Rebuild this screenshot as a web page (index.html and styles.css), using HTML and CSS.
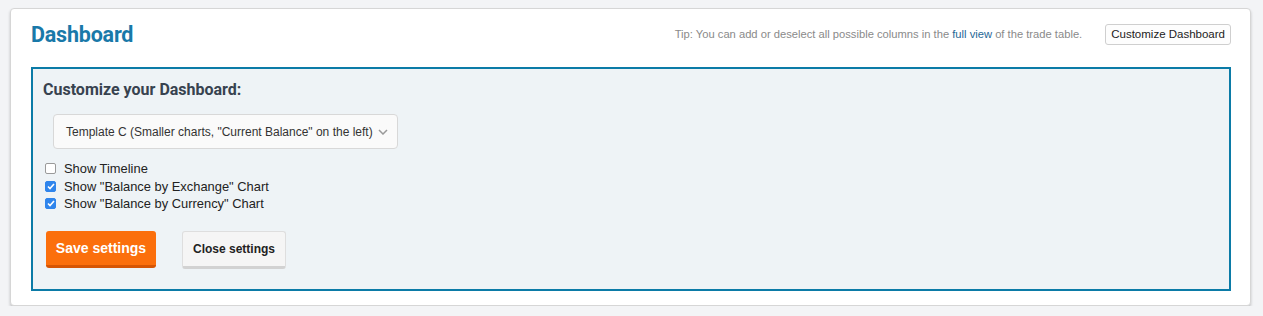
FILE: index.html
```html
<!DOCTYPE html>
<html>
<head>
<meta charset="utf-8">
<link rel="stylesheet" href="styles.css">
</head>
<body>
<div class="card">
  <div class="header">
    <h1 class="title">Dashboard</h1>
    <div class="header-right">
      <span class="tip">Tip: You can add or deselect all possible columns in the <a class="tip-link">full view</a> of the trade table.</span>
      <button class="btn-small">Customize Dashboard</button>
    </div>
  </div>
  <div class="settings">
    <h2 class="settings-title">Customize your Dashboard:</h2>
    <div class="select">
      <span>Template C (Smaller charts, "Current Balance" on the left)</span>
      <svg class="chev" width="10" height="6" viewBox="0 0 10 6"><path d="M1 1l4 4 4-4" fill="none" stroke="#999" stroke-width="1.5"/></svg>
    </div>
    <div class="checks">
      <label class="check"><span class="box"></span>Show Timeline</label>
      <label class="check"><span class="box on"><svg width="8" height="7" viewBox="0 0 8 7"><path d="M1 3.5l2 2L7 1" fill="none" stroke="#fff" stroke-width="1.6"/></svg></span>Show "Balance by Exchange" Chart</label>
      <label class="check"><span class="box on"><svg width="8" height="7" viewBox="0 0 8 7"><path d="M1 3.5l2 2L7 1" fill="none" stroke="#fff" stroke-width="1.6"/></svg></span>Show "Balance by Currency" Chart</label>
    </div>
    <div class="actions">
      <button class="btn-save">Save settings</button>
      <button class="btn-close">Close settings</button>
    </div>
  </div>
</div>
</body>
</html>
```
FILE: styles.css
```css
html, body { margin: 0; padding: 0; }
body {
  background: #f3f4f6;
  font-family: "Liberation Sans", Arial, sans-serif;
  padding: 8px 12px 0 10px;
}
.card {
  background: #fff;
  border: 1px solid #d6d6d6;
  border-radius: 4px;
  box-shadow: 0 2px 3px rgba(0,0,0,0.2);
  padding: 10px 19px 13px 20px;
  height: 273px;
}
.header {
  display: flex;
  justify-content: space-between;
  align-items: center;
  height: 30px;
  margin-bottom: 18px;
}
.title {
  margin: 0;
  font-family: Roboto, sans-serif;
  font-weight: 700;
  font-size: 21.5px;
  color: #1979a9;
  letter-spacing: -0.2px;
}
.header-right { display: flex; align-items: center; }
.tip { font-size: 11.2px; color: #8a8a8a; margin-right: 23px; }
.tip-link { color: #1f6897; }
.btn-small {
  font-family: "Liberation Sans", Arial, sans-serif;
  font-size: 11.5px;
  color: #222;
  background: #fdfdfd;
  border: 1px solid #cfcfcf;
  border-radius: 3px;
  height: 21px;
  padding: 0 5px;
}
.settings {
  border: 2px solid #0b7ba7;
  background: #eef3f6;
  height: 220px;
  padding: 0 10px;
}
.settings-title {
  margin: 11px 0 0;
  font-family: Roboto, sans-serif;
  font-weight: 700;
  font-size: 16px;
  color: #37424f;
  height: 22px;
}
.select {
  margin: 12px 0 0 10px;
  width: 345px;
  height: 35px;
  box-sizing: border-box;
  border: 1px solid #d8d8d8;
  border-radius: 4px;
  background: #fafafa;
  display: flex;
  align-items: center;
  justify-content: space-between;
  padding: 0 9px 0 12px;
  font-size: 12px;
  color: #333;
  white-space: nowrap;
}
.chev { margin-top: 1px; flex: none; }
.checks { margin-top: 11px; display: flex; flex-direction: column; }
.check {
  display: flex;
  align-items: center;
  font-size: 12.9px;
  color: #222;
  height: 17.5px;
}
.box {
  width: 11px;
  height: 11px;
  box-sizing: border-box;
  border: 1px solid #9a9a9a;
  border-radius: 2px;
  background: #fff;
  margin: 0 8px 0 2px;
  display: flex;
  align-items: center;
  justify-content: center;
}
.box.on { background: #2f85ec; border-color: #2f85ec; }
.actions { display: flex; margin-top: 18px; padding-left: 3px; align-items: flex-start; }
.btn-save {
  font-family: "Liberation Sans", Arial, sans-serif;
  font-weight: 700;
  font-size: 14px;
  color: #fff;
  background: #fb6f0c;
  border: none;
  border-bottom: 3px solid #d65504;
  border-radius: 3px;
  width: 110px;
  height: 37px;
  padding: 0;
}
.btn-close {
  font-family: "Liberation Sans", Arial, sans-serif;
  font-weight: 700;
  font-size: 12px;
  color: #222;
  background: #f5f5f5;
  border: 1px solid #dedede;
  border-bottom: 3px solid #d2d2d2;
  border-radius: 3px;
  width: 104px;
  height: 38px;
  margin-left: 26px;
  padding: 0;
}
```
